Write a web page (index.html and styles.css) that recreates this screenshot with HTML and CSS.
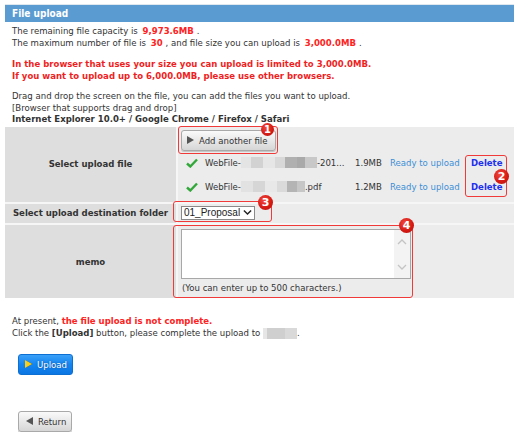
FILE: index.html
```html
<!DOCTYPE html>
<html lang="en">
<head>
<meta charset="utf-8">
<title>File upload</title>
<link rel="stylesheet" href="styles.css">
</head>
<body>
<div class="page">
  <div class="panel-title">File upload</div>

  <div class="intro">
    <p>The remaining file capacity is <span class="num">9,973.6MB</span>.<br>
    The maximum number of file is <span class="num">30</span>, and file size you can upload is <span class="num">3,000.0MB</span>.</p>
    <p class="warn">In the browser that uses your size you can upload is limited to 3,000.0MB.<br>
    If you want to upload up to 6,000.0MB, please use other browsers.</p>
    <p>Drag and drop the screen on the file, you can add the files you want to upload.<br>
    [Browser that supports drag and drop]<br>
    <b>Internet Explorer 10.0+ / Google Chrome / Firefox / Safari</b></p>
  </div>

  <div class="form-grid">
    <div class="label">Select upload file</div>
    <div class="value value-files">
      <button class="btn btn-gray btn-add" type="button"><span class="tri tri-right"></span>Add another file</button>
      <div class="file-list">
        <div class="file-row">
          <svg class="check" viewBox="0 0 12 10" width="12" height="10"><path d="M1 5.5 L4.3 8.5 L11 1.5" fill="none" stroke="#33a83a" stroke-width="2.4"/></svg>
          <span class="fname">WebFile-<span class="mask mask-a"></span>-201...</span>
          <span class="fsize">1.9MB</span>
          <span class="fstatus">Ready to upload</span>
          <a class="fdel" href="#">Delete</a>
        </div>
        <div class="file-row">
          <svg class="check" viewBox="0 0 12 10" width="12" height="10"><path d="M1 5.5 L4.3 8.5 L11 1.5" fill="none" stroke="#33a83a" stroke-width="2.4"/></svg>
          <span class="fname">WebFile-<span class="mask mask-b"></span>.pdf</span>
          <span class="fsize">1.2MB</span>
          <span class="fstatus">Ready to upload</span>
          <a class="fdel" href="#">Delete</a>
        </div>
      </div>
      <span class="mark mark-1"></span><span class="pin pin-1">1</span>
      <span class="mark mark-2"></span><span class="pin pin-2">2</span>
    </div>

    <div class="label">Select upload destination folder</div>
    <div class="value value-folder">
      <span class="select">01_Proposal<svg viewBox="0 0 10 7" width="9" height="7"><path d="M1 1.2 L5 5.2 L9 1.2" fill="none" stroke="#222" stroke-width="1.6"/></svg></span>
      <span class="mark mark-3"></span><span class="pin pin-3">3</span>
    </div>

    <div class="label">memo</div>
    <div class="value value-memo">
      <div class="memo-box">
        <div class="memo-text"></div>
        <div class="memo-scroll">
          <svg viewBox="0 0 10 7" width="10" height="7"><path d="M1 6 L5 2 L9 6" fill="none" stroke="#c4c4c4" stroke-width="1.3"/></svg>
          <svg viewBox="0 0 10 7" width="10" height="7"><path d="M1 1 L5 5 L9 1" fill="none" stroke="#c4c4c4" stroke-width="1.3"/></svg>
        </div>
      </div>
      <div class="memo-hint">(You can enter up to 500 characters.)</div>
      <span class="mark mark-4"></span><span class="pin pin-4">4</span>
    </div>
  </div>

  <div class="status">
    At present, <span class="alert">the file upload is not complete.</span><br>
    Click the <b>[Upload]</b> button, please complete the upload to <span class="mask mask-c"></span>.
  </div>

  <div class="actions actions-upload">
    <button class="btn btn-blue" type="button"><span class="tri tri-yellow"></span>Upload</button>
  </div>
  <div class="actions actions-return">
    <button class="btn btn-gray btn-return" type="button"><span class="tri tri-left"></span>Return</button>
  </div>
</div>
</body>
</html>
```

FILE: styles.css
```css
body {
  margin: 0;
  background: #fff;
  color: #333;
  font-family: "DejaVu Sans Condensed", "DejaVu Sans", sans-serif;
  font-size: 9.5px;
  line-height: 11.5px;
}

.page {
  padding: 4px 6px 0 5px;
}

/* title bar */
.panel-title {
  border-top: 1px solid #dfe7ef;
  height: 17px;
  line-height: 17px;
  padding-left: 7px;
  background: #5a9bd1;
  color: #fff;
  font-weight: bold;
  font-size: 10px;
}

/* notes above the form */
.intro {
  padding: 3px 7px 0;
}
.intro p {
  margin: 0 0 9px;
}
.intro p:first-child {
  line-height: 12px;
}
.intro p:last-child {
  margin-bottom: 2px;
}
.num {
  color: #f22;
  font-weight: bold;
  padding: 0 3px 0 2px;
}
.warn {
  color: #f01e1e;
  font-weight: bold;
}

/* form table */
.form-grid {
  display: grid;
  grid-template-columns: 171px 1fr;
  gap: 2px;
  background: #f6f6f6;
}
.label {
  background: #dedede;
  font-weight: bold;
  display: flex;
  align-items: center;
  justify-content: center;
  text-align: center;
}
.value {
  background: #ececec;
  position: relative;
}

.value-files {
  padding: 3px 3px 3px;
}
.btn-add {
  height: 21px;
  width: 95px;
  padding-top: 1px;
}
.file-list {
  display: flex;
  flex-direction: column;
}
.file-row {
  height: 24px;
  display: grid;
  grid-template-columns: 19px 150px 35px 81px auto;
  align-items: center;
  padding-left: 5px;
}
.check {
  display: block;
}
.fname {
  display: flex;
  align-items: center;
  white-space: nowrap;
}
.fstatus {
  color: #3d8fd6;
}
.fdel {
  color: #1f2ff0;
  font-weight: bold;
  text-decoration: none;
}

/* greyed-out parts of file names */
.mask {
  display: inline-block;
  height: 11px;
  vertical-align: middle;
}
.mask-a {
  width: 76px;
  background: linear-gradient(90deg, #e4e4e4 0 10px, #d2d2d2 10px 22px, #e6e6e6 22px 34px, #d8d8d8 34px 44px, #b0b0b0 44px 56px, #a9a9a9 56px 64px, #c8c8c8 64px 76px);
}
.mask-b {
  width: 64px;
  background: linear-gradient(90deg, #e2e2e2 0 12px, #d6d6d6 12px 24px, #e8e8e8 24px 36px, #dadada 36px 46px, #b4b4b4 46px 56px, #c6c6c6 56px 64px);
}
.mask-c {
  width: 34px;
  background: linear-gradient(90deg, #e6e6e6 0 4px, #cfcfcf 4px 22px, #d9d9d9 22px 34px);
}

.value-folder {
  padding: 2px 3px 3px;
}
.select {
  display: inline-flex;
  align-items: center;
  gap: 3px;
  height: 12px;
  padding: 0 2px 0 2px;
  border: 1px solid #8a8a8a;
  background: #fff;
  color: #222;
  font-family: "Liberation Sans", sans-serif;
  font-size: 10px;
}

.value-memo {
  padding: 4px 3px 5px;
}
.memo-box {
  width: 228px;
  height: 48px;
  border: 1px solid #a8a8a8;
  background: #fff;
  display: flex;
}
.memo-text {
  flex: 1;
}
.memo-scroll {
  width: 16px;
  background: #f3f3f3;
  display: flex;
  flex-direction: column;
  justify-content: space-between;
  align-items: center;
  padding: 8px 0 7px;
}
.memo-scroll svg {
  display: block;
}
.memo-hint {
  margin-top: 3px;
  padding-left: 1px;
}

/* callout markers */
.mark {
  position: absolute;
  border: 1.5px solid #f03a3a;
  border-radius: 3px;
  box-sizing: border-box;
}
.pin {
  position: absolute;
  width: 15px;
  height: 15px;
  border-radius: 50%;
  background: radial-gradient(circle at 40% 35%, #f24a40 0, #d61a14 55%, #b80f0c 100%);
  color: #fff;
  font-family: "DejaVu Sans", sans-serif;
  font-weight: bold;
  font-size: 11px;
  line-height: 15px;
  text-align: center;
}
.mark-1 { left: 0; top: -1px; width: 100px; height: 28px; }
.pin-1 { left: 83px; top: -4px; width: 13px; height: 13px; line-height: 13px; font-size: 10px; }
.mark-2 { left: 287px; top: 28px; width: 42px; height: 42px; }
.pin-2 { left: 316px; top: 42px; }
.mark-3 { left: -5px; top: -3px; width: 99px; height: 21px; }
.pin-3 { left: 80px; top: -9px; }
.mark-4 { left: -5px; top: 0; width: 240px; height: 73px; }
.pin-4 { left: 221px; top: -7px; }

/* status message */
.status {
  margin-top: 17px;
  padding-left: 7px;
}
.alert {
  color: #f22;
  font-weight: bold;
}

/* buttons */
.btn {
  display: inline-flex;
  align-items: center;
  gap: 5px;
  box-sizing: border-box;
  padding: 0 5px;
  border-radius: 3px;
  font-family: inherit;
  font-size: 9.5px;
  cursor: pointer;
}
.btn-gray {
  border: 1px solid #a9a9a9;
  background: linear-gradient(#fafafa, #e8e8e8 50%, #d6d6d6);
  color: #333;
  box-shadow: 0 1px 0 #c6c6c6;
}
.btn-blue {
  height: 21px;
  width: 55px;
  border: 1px solid #0d6fd2;
  background: linear-gradient(#3aa0f8, #1485f0 50%, #0b76e2);
  color: #fff;
  text-shadow: 0 0 2px #0a4f9e;
  padding-left: 6px;
}
.btn-return {
  height: 21px;
  width: 54px;
  padding-left: 7px;
}
.tri {
  width: 0;
  height: 0;
  border-top: 4px solid transparent;
  border-bottom: 4px solid transparent;
}
.tri-right {
  border-left: 7px solid #555;
}
.tri-left {
  border-right: 7px solid #555;
}
.tri-yellow {
  border-left: 7px solid #f5d020;
  filter: drop-shadow(0 0 0.6px #6a4a00);
}

.actions-upload {
  margin-top: 15px;
  padding-left: 13px;
}
.actions-return {
  margin-top: 36px;
  padding-left: 13px;
}
```
